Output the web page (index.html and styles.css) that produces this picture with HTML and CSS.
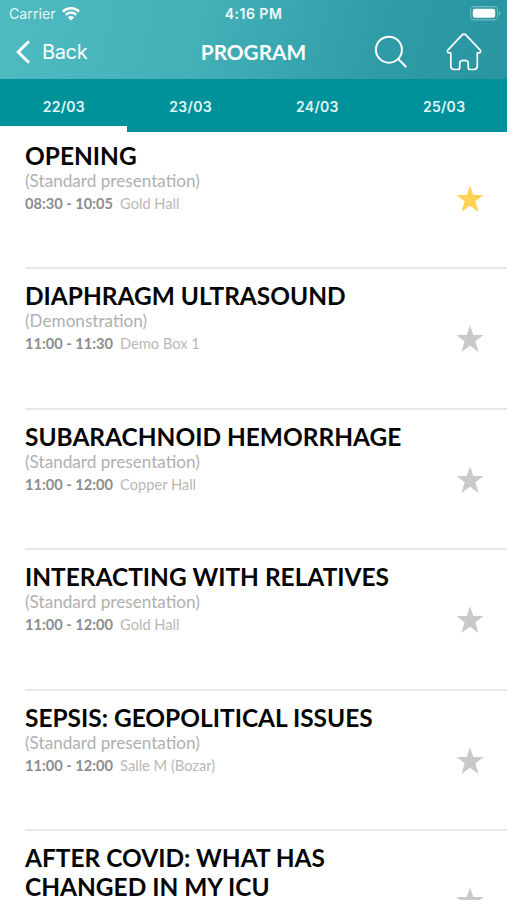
FILE: index.html
```html
<!DOCTYPE html>
<html lang="en">
<head>
<meta charset="utf-8">
<title>Program</title>
<link rel="stylesheet" href="styles.css">
</head>
<body>
<svg width="0" height="0" class="defs" aria-hidden="true">
  <symbol id="star" viewBox="0 0 28 28"><path d="M14 .3 17.3 10.1H27.6L19.4 16.3 22.5 27 14 20.8 5.5 27 8.6 16.3.4 10.1H10.7Z"/></symbol>
</svg>
<div class="app">
  <header class="header">
    <div class="status">
      <div class="carrier"><span>Carrier</span>
        <svg width="18" height="14" viewBox="0 0 18 14" fill="none" stroke="#fff" stroke-width="2.5"><path d="M.9 4.7A11.5 11.5 0 0 1 17.1 4.7M3.8 7.8A7.3 7.3 0 0 1 14.2 7.8"/><path d="M9 13.6 5.8 10.4A4.5 4.5 0 0 1 12.2 10.4Z" fill="#fff" stroke="none"/></svg>
      </div>
      <div class="clock">4:16 PM</div>
      <svg class="battery" width="31" height="15" viewBox="0 0 31 15"><rect x=".6" y=".6" width="27" height="13.3" rx="3.8" fill="none" stroke="#75b9c1" stroke-width="1.1"/><rect x="2.8" y="2.8" width="22.4" height="9" rx="2" fill="#fff"/><path d="M29 5V9.8Q30.5 9 30.5 7.4T29 5" fill="#75b9c1"/></svg>
    </div>
    <nav class="nav">
      <a class="back"><svg width="15" height="24" viewBox="0 0 15 24" fill="none" stroke="#fff" stroke-width="3"><path d="M13 1.2 2.2 12 13 22.8"/></svg><span>Back</span></a>
      <h1>PROGRAM</h1>
      <div class="actions">
        <svg width="34" height="34" viewBox="0 0 34 34" fill="none" stroke="#fff" stroke-width="2"><circle cx="14.9" cy="14.7" r="13"/><path d="M24.2 24 32.2 32"/></svg>
        <svg width="36" height="38" viewBox="0 0 36 38" fill="none" stroke="#fff" stroke-width="1.7" stroke-linejoin="round"><path d="M16.2 1.8Q18 .5 19.8 1.8L34.4 17.3Q35.2 18.8 33.5 19.8H31.3V33.3Q31.3 36.5 28 36.5H24.3Q22.3 36.5 22.3 34.5V30.5Q22.3 27.4 18 27.4T13.7 30.5V34.5Q13.7 36.5 11.7 36.5H8Q4.8 36.5 4.8 33.3V19.8H2.5Q.8 18.8 1.6 17.3Z"/></svg>
      </div>
    </nav>
  </header>
  <div class="tabs">
    <div class="tab active">22/03</div>
    <div class="tab">23/03</div>
    <div class="tab">24/03</div>
    <div class="tab">25/03</div>
  </div>
  <main class="list">
    <article class="row"><div class="info"><h2>OPENING</h2><p class="kind">(Standard presentation)</p><p class="when"><b>08:30 - 10:05</b><span>Gold Hall</span></p></div><svg class="star on"><use href="#star"/></svg></article>
    <article class="row"><div class="info"><h2>DIAPHRAGM ULTRASOUND</h2><p class="kind">(Demonstration)</p><p class="when"><b>11:00 - 11:30</b><span>Demo Box 1</span></p></div><svg class="star"><use href="#star"/></svg></article>
    <article class="row"><div class="info"><h2>SUBARACHNOID HEMORRHAGE</h2><p class="kind">(Standard presentation)</p><p class="when"><b>11:00 - 12:00</b><span>Copper Hall</span></p></div><svg class="star"><use href="#star"/></svg></article>
    <article class="row"><div class="info"><h2>INTERACTING WITH RELATIVES</h2><p class="kind">(Standard presentation)</p><p class="when"><b>11:00 - 12:00</b><span>Gold Hall</span></p></div><svg class="star"><use href="#star"/></svg></article>
    <article class="row"><div class="info"><h2>SEPSIS: GEOPOLITICAL ISSUES</h2><p class="kind">(Standard presentation)</p><p class="when"><b>11:00 - 12:00</b><span>Salle M (Bozar)</span></p></div><svg class="star"><use href="#star"/></svg></article>
    <article class="row"><div class="info"><h2>AFTER COVID: WHAT HAS<br>CHANGED IN MY ICU</h2></div><svg class="star"><use href="#star"/></svg></article>
  </main>
</div>
</body>
</html>
```

FILE: styles.css
```css
* { box-sizing: border-box; margin: 0; padding: 0; }
body { background: #fff; font-family: Lato, sans-serif; }
svg { display: block; flex: none; }
.defs { position: absolute; }
.app { height: 900px; overflow: hidden; display: flex; flex-direction: column; }
.header { flex: none; height: 79px; color: #fff; background: linear-gradient(105deg, #4fbbc1 0%, #43b0b8 40%, #2f9ba6 75%, #2995a1 100%); }
.status { height: 27px; display: grid; grid-template-columns: 1fr auto 1fr; align-items: center; padding: 0 6px 0 6px; font: 14.2px Inter, sans-serif; }
.carrier { display: flex; align-items: center; gap: 6px; padding-left: 3px; color: #e4f5f6; }
.clock { font-weight: 600; font-size: 14px; letter-spacing: .5px; color: #effafa; }
.battery { justify-self: end; }
.nav { height: 52px; display: grid; grid-template-columns: 1fr auto 1fr; align-items: center; padding: 0 25px 2px; }
.back { display: flex; align-items: center; gap: 11px; margin-left: -9px; font: 20px Inter, sans-serif; letter-spacing: -.35px; }
.nav h1 { font-size: 20.8px; line-height: 26px; font-weight: 700; }
.actions { display: flex; align-items: center; justify-content: flex-end; gap: 38px; }
.tabs { flex: none; height: 53px; display: grid; grid-template-columns: repeat(4, 1fr); background: #00929b; }
.tab { display: flex; justify-content: center; padding: 19px 0 0 1px; color: #e2f6f7; font: 600 14px/18px Inter, sans-serif; letter-spacing: .3px; border-bottom: 6px solid transparent; }
.active { border-color: #fff; }
.list { flex: none; padding: 0 0 0 25px; }
.row { height: 140.5px; display: flex; justify-content: space-between; align-items: flex-start; padding: 12px 23.5px 0 0; border-bottom: 2px solid #e7e7e7; }
.row:first-child { height: 137px; padding-top: 9px; }
h2 { font-size: 24.46px; line-height: 29px; font-weight: 700; color: #050505; white-space: nowrap; }
.kind { font-size: 17.15px; line-height: 21px; color: #b0b0b0; }
.when { display: flex; gap: 7px; font-size: 14.65px; line-height: 25px; color: #b8b8b8; }
.when b { color: #8d8d8d; }
.star { width: 28px; height: 28px; margin-top: 44px; fill: #c9c9c9; }
.on { fill: #ffd254; }
```
